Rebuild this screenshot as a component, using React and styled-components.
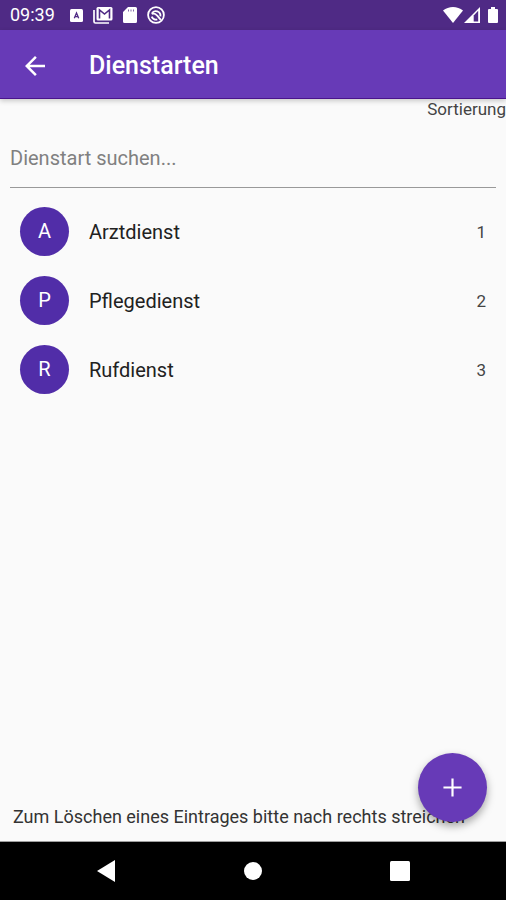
import { useState } from 'react';
import styled, { createGlobalStyle } from 'styled-components';

const services = [
  { id: 1, name: 'Arztdienst' },
  { id: 2, name: 'Pflegedienst' },
  { id: 3, name: 'Rufdienst' },
];

const StatusBar = () => {
  return (
    <StatusBarWrap>
      <span className='clock'>09:39</span>
      <svg className='keyboard' width='13' height='13' viewBox='0 0 13 13' aria-hidden='true'>
        <rect width='13' height='13' rx='1.5' fill='#fff' />
        <path d='M4.3 9.3 6.5 4 8.7 9.300M5 7.7h3' fill='none' stroke='#4f2a85' strokeWidth='1.3' />
      </svg>
      <svg className='mail' width='20' height='18' viewBox='0 0 20 18' aria-hidden='true'>
        <path d='M1 4v11.5a1.5 1.5 0 0 0 1.5 1.5H16' fill='none' stroke='#fff' strokeWidth='1.7' />
        <rect x='3.5' y='1' width='16' height='13.5' rx='1.5' fill='#fff' />
        <path d='M6.5 12.500V4l5 4 5-4v8.500' fill='none' stroke='#4f2a85' strokeWidth='1.6' />
      </svg>
      <svg className='card' width='14' height='16' viewBox='0 0 14 16' aria-hidden='true'>
        <path d='M5 0h7.5A1.5 1.5 0 0 1 14 1.500v13a1.5 1.5 0 0 1-1.5 1.500h-11A1.5 1.5 0 0 1 0 14.500V5z' fill='#fff' />
        <path d='M5.500 2.500v2M8 2.500v2M10.500 2.500v2' stroke='#4f2a85' strokeWidth='1' opacity='0.7' />
      </svg>
      <svg className='sync' width='18' height='18' viewBox='0 0 18 18' fill='none' stroke='#fff' aria-hidden='true'>
        <circle cx='9' cy='9' r='7.9' strokeWidth='1.8' />
        <path d='M4.8 7.600a4.600 4.600 0 0 1 8.600 2.800' strokeWidth='1.8' />
        <path d='M4.700 10.600a4.600 4.600 0 0 0 5.600 2.800' strokeWidth='1.8' />
        <path d='M4.800 7.800c2.500-.5 4 .2 5.200 1.700l3.800 4.300' strokeWidth='1.900' />
      </svg>
      <svg className='wifi' width='20' height='16' viewBox='0 0 20 16' aria-hidden='true'>
        <path d='M0 3.600C5.600-1.200 14.400-1.200 20 3.600L10 16z' fill='#fff' />
      </svg>
      <svg className='signal' width='16' height='16' viewBox='0 0 16 16' aria-hidden='true'>
        <path d='M0 16 16 0v16z' fill='#fff' />
        <path d='M9.700 14.400V8.600l4.500-4.800v10.600z' fill='#4f2a85' />
      </svg>
      <svg className='battery' width='10' height='16' viewBox='0 0 10 16' aria-hidden='true'>
        <path d='M3 0h4v2h2a1 1 0 0 1 1 1v12a1 1 0 0 1-1 1H1a1 1 0 0 1-1-1V3a1 1 0 0 1 1-1h2z' fill='#fff' />
      </svg>
    </StatusBarWrap>
  );
};

const ServiceItem = ({ service }) => {
  return (
    <ServiceItemWrap>
      <span className='avatar'>{service.name[0]}</span>
      <span className='name'>{service.name}</span>
      <span className='order'>{service.id}</span>
    </ServiceItemWrap>
  );
};

const NavigationBar = () => {
  return (
    <NavigationBarWrap>
      <button type='button' aria-label='Zurück'>
        <svg width='18' height='22' viewBox='0 0 18 22'>
          <path d='M0 11 18 0v22z' fill='#fff' />
        </svg>
      </button>
      <button type='button' aria-label='Startbildschirm'>
        <svg width='18' height='18' viewBox='0 0 18 18'>
          <circle cx='9' cy='9' r='9' fill='#fff' />
        </svg>
      </button>
      <button type='button' aria-label='Übersicht'>
        <svg width='20' height='20' viewBox='0 0 20 20'>
          <rect width='20' height='20' rx='1.5' fill='#fff' />
        </svg>
      </button>
    </NavigationBarWrap>
  );
};

const App = () => {
  const [query, setQuery] = useState('');
  const visible = services.filter(({ name }) => name.toLowerCase().includes(query.toLowerCase()));

  return (
    <>
      <GlobalStyle />
      <Page>
        <StatusBar />
        <AppBar>
          <button type='button' className='back-btn' aria-label='Zurück'>
            <svg width='30' height='30' viewBox='0 0 24 24'>
              <path d='M20 11H7.83l5.59-5.590L12 4l-8 8 8 8 1.410-1.410L7.830 13H20z' fill='#fff' />
            </svg>
          </button>
          <h1>Dienstarten</h1>
        </AppBar>
        <Content>
          <SortLabel>Sortierung</SortLabel>
          <SearchInput
            type='text'
            aria-label='Dienstart suchen'
            placeholder='Dienstart suchen...'
            value={query}
            onChange={(e) => setQuery(e.target.value)}
          />
          <ServiceList>
            {visible.map((service) => (
              <ServiceItem key={service.id} service={service} />
            ))}
          </ServiceList>
          <Hint>Zum Löschen eines Eintrages bitte nach rechts streichen</Hint>
          <AddButton type='button' aria-label='Dienstart hinzufügen'>
            <svg width='29' height='29' viewBox='0 0 24 24'>
              <path d='M19.500 12.900h-6.600v6.600h-1.800v-6.600H4.500v-1.800h6.600V4.500h1.800v6.600h6.600z' fill='#fff' />
            </svg>
          </AddButton>
        </Content>
        <NavigationBar />
      </Page>
    </>
  );
};

const GlobalStyle = createGlobalStyle`
  * {
    box-sizing: border-box;
  }
  body {
    margin: 0;
    background: #fafafa;
    font-family: Roboto, 'Liberation Sans', sans-serif;
  }
  button {
    display: flex;
    align-items: center;
    justify-content: center;
    padding: 0;
    border: 0;
    background: none;
    cursor: pointer;
  }
`;

const Page = styled.div`
  display: flex;
  flex-direction: column;
  min-height: 100vh;
`;

const StatusBarWrap = styled.div`
  display: flex;
  align-items: center;
  height: 30px;
  padding: 0 8px 0 10px;
  background: #4f2a85;
  color: #fff;
  .clock {
    font-size: 18px;
    line-height: 30px;
  }
  .keyboard {
    margin-left: 15px;
  }
  .mail {
    margin-left: 10px;
  }
  .card {
    margin-left: 10px;
  }
  .sync {
    margin-left: 10px;
  }
  .wifi {
    margin-left: auto;
  }
  .signal {
    margin-left: 1px;
  }
  .battery {
    margin-left: 8px;
  }
`;

const AppBar = styled.header`
  display: flex;
  align-items: center;
  height: 69px;
  padding: 3px 20px 0;
  background: #673ab7;
  border-bottom: 1px solid #4a148c;
  box-shadow: 0 2px 5px rgba(0, 0, 0, 0.2);
  z-index: 1;
  color: #fff;
  h1 {
    margin: 0 0 0 39px;
    font-size: 25px;
    font-weight: 500;
    line-height: 32px;
  }
`;

const Content = styled.main`
  position: relative;
  display: flex;
  flex: 1;
  flex-direction: column;
  border-bottom: 1px solid #9e9e9e;
`;

const SortLabel = styled.span`
  align-self: flex-end;
  color: #444;
  font-size: 17px;
  line-height: 20px;
`;

const SearchInput = styled.input`
  height: 59px;
  margin: 10px 10px 0;
  padding: 0;
  border: 0;
  border-bottom: 1px solid #999;
  outline: none;
  background: transparent;
  color: #212121;
  font-family: inherit;
  font-size: 20px;
  &::placeholder {
    color: #808080;
    opacity: 1;
  }
`;

const ServiceList = styled.ul`
  flex: 1;
  margin: 0;
  padding: 9px 0 0;
  list-style: none;
`;

const ServiceItemWrap = styled.li`
  display: flex;
  align-items: center;
  height: 69px;
  padding: 0 20px;
  color: #212121;
  .avatar {
    width: 49px;
    border-radius: 50%;
    background: #512da8;
    color: #fff;
    font-size: 20px;
    line-height: 49px;
    text-align: center;
  }
  .name {
    flex: 1;
    margin-left: 20px;
    font-size: 20px;
  }
  .order {
    color: #444;
    font-size: 17px;
  }
`;

const Hint = styled.p`
  margin: 0;
  padding: 0 13px 12px;
  color: #333;
  font-size: 18px;
  line-height: 24px;
`;

const AddButton = styled.button`
  position: absolute;
  right: 19px;
  bottom: 19px;
  width: 69px;
  height: 69px;
  border-radius: 50%;
  background: #673ab7;
  box-shadow: 0 4px 8px rgba(0, 0, 0, 0.35);
`;

const NavigationBarWrap = styled.nav`
  display: flex;
  justify-content: center;
  height: 58px;
  background: #000;
  button {
    width: 29%;
  }
`;

export default App;
